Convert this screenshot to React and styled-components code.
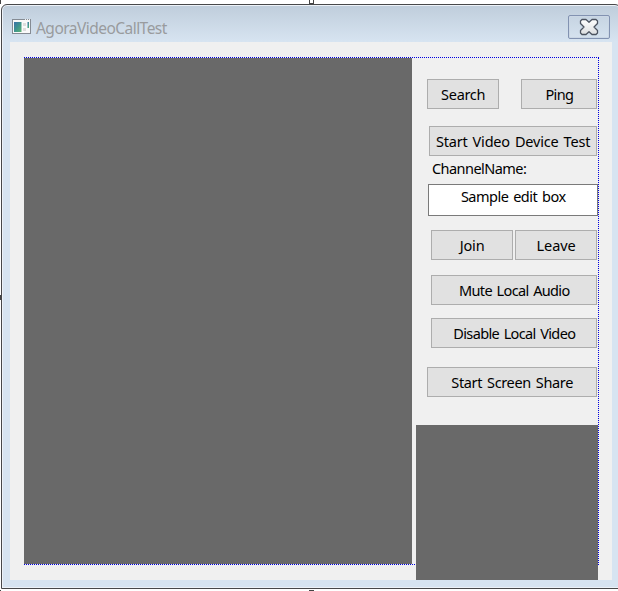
import React from "react";
import styled, { createGlobalStyle } from "styled-components";

const GlobalStyle = createGlobalStyle`
  * { box-sizing: border-box; }
  body { margin: 0; background: #fff; overflow: hidden; }
`;

const Canvas = styled.div`
  position: relative;
  width: 618px;
  height: 591px;
  padding: 4px 0 0 1px;
  overflow: hidden;
  background: #fff;
  font-family: "Noto Sans", sans-serif;
`;

const Handle = styled.i`
  position: absolute;
  left: ${(p) => p.$x}px;
  top: ${(p) => p.$y}px;
  width: 5px;
  height: 5px;
  border: 1px solid #444;
  background: #fff;
`;

const Window = styled.div`
  width: 620px;
  height: 585px;
  border: 1px solid #48484a;
  border-radius: 6px 6px 0 0;
  padding: 0 7px 7px 7px;
  background: linear-gradient(#bfcddb, #d7e4f1 37px);
  box-shadow: inset 0 0 0 1px #edf2f8;
`;

const TitleBar = styled.header`
  display: flex;
  align-items: flex-start;
  height: 37px;
  padding: 0 2px;
  margin-left: 1px;
`;

const AppIcon = styled.svg`
  flex: none;
  width: 19px;
  height: 16px;
  margin-top: 14px;
`;

const Title = styled.h1`
  flex: 1;
  margin: 11px 0 0 5px;
  color: #999b9e;
  font-size: 15.5px;
  font-weight: 400;
  line-height: 24px;
  letter-spacing: -0.53px;
`;

const CloseButton = styled.button`
  display: flex;
  align-items: center;
  justify-content: center;
  width: 42px;
  height: 24px;
  margin: 10px 1px 0 0;
  padding: 0;
  border: 1px solid #8292b1;
  border-radius: 2px;
  background: transparent;
  box-shadow: inset 0 0 0 1px #cbd7e5;
`;

const Client = styled.main`
  width: 602px;
  height: 538px;
  margin-left: 1px;
  padding: 15px 0 0 14px;
  background: #f0f0f0;
`;

const Guide = styled.div`
  display: flex;
  align-items: flex-start;
  width: 575px;
  height: 508px;
  border: 1px dotted #0000e0;
  border-left: 0;
`;

const VideoPane = styled.div`
  flex: none;
  width: ${(p) => p.$w}px;
  height: ${(p) => p.$h}px;
  background: #696969;
`;

const Sidebar = styled.div`
  display: flex;
  flex-direction: column;
  flex: none;
  width: 182px;
  margin-left: 4px;
  padding-top: 21px;
`;

const Row = styled.div`
  display: flex;
  justify-content: space-between;
  margin: 0 1px ${(p) => p.$after}px ${(p) => p.$inset}px;
`;

const Caption = styled.span`
  white-space: nowrap;
  word-spacing: 1.5px;
  letter-spacing: ${(p) => p.$spacing || 0}px;
  margin-right: ${(p) => p.$spacing || 0}px;
`;

const Button = styled.button`
  display: flex;
  align-items: center;
  justify-content: center;
  width: ${(p) => (p.$w ? p.$w + "px" : "100%")};
  height: 30px;
  padding: 0 0 1px;
  border: 1px solid #adadad;
  border-radius: 0;
  background: #e1e1e1;
  color: #000;
  font: 14.5px/20px "Noto Sans", sans-serif;
`;

const Label = styled.label`
  height: 28px;
  padding: 2px 0 0 16px;
  color: #000;
  font-size: 14.5px;
  line-height: 20px;
`;

const EditBox = styled.div`
  width: 170px;
  height: 32px;
  margin: 0 0 14px 12px;
  padding-top: 1px;
  border: 1px solid #7a7a7a;
  background: #fff;
  color: #000;
  font-size: 14.5px;
  line-height: 20px;
  text-align: center;
`;

function Action({ text, spacing, width }) {
  return (
    <Button $w={width}>
      <Caption $spacing={spacing}>{text}</Caption>
    </Button>
  );
}

export default function App() {
  return (
    <>
      <GlobalStyle />
      <Canvas>
        <Handle $x={-4} $y={-1} />
        <Handle $x={309} $y={-1} />
        <Handle $x={-4} $y={295} />
        <Handle $x={-4} $y={590} />
        <Handle $x={309} $y={590} />
        <Window>
          <TitleBar>
            <AppIcon viewBox="0 0 19 16">
              <defs>
                <linearGradient id="screen" x1="0" y1="0" x2="1" y2="1">
                  <stop offset="0" stopColor="#3b70aa" />
                  <stop offset="0.5" stopColor="#3f948e" />
                  <stop offset="1" stopColor="#5cb474" />
                </linearGradient>
              </defs>
              <path d="M0 0h19v15H0z" fill="#858b93" />
              <path d="M1 1h17v13H1z" fill="#fafafa" />
              <path d="M13 0h1v1h-1zM15 0h1v1h-1zM17 0h1v1h-1z" fill="#eee" />
              <path d="M2 3h7.5v10H2z" fill="url(#screen)" />
              <path d="M11 4h3v3h-3zM11 9h3v3h-3z" fill="#dedede" />
              <path d="M15.5 3H17v6h-1.5z" fill="url(#screen)" />
            </AppIcon>
            <Title>AgoraVideoCallTest</Title>
            <CloseButton aria-label="Close">
              <svg width="20" height="18" viewBox="0 0 20 18">
                <defs>
                  <linearGradient id="cross" x1="0" y1="0" x2="0" y2="1">
                    <stop offset="0" stopColor="#fff" />
                    <stop offset="1" stopColor="#dcdee0" />
                  </linearGradient>
                </defs>
                <path
                  d="M1.5 3 3 1.5h4l3 2.7 3-2.7h4L18.5 3v2.5L15 9l3.5 3.5V15L17 16.5h-4l-3-2.7-3 2.7H3L1.5 15v-2.5L5 9 1.5 5.5z"
                  fill="url(#cross)"
                  stroke="#4c5360"
                  strokeWidth="1.3"
                  strokeLinejoin="round"
                />
              </svg>
            </CloseButton>
          </TitleBar>
          <Client>
            <Guide>
              <VideoPane $w={388} $h={506} />
              <Sidebar>
                <Row $inset={11} $after={17}>
                  <Action text="Search" width={72} spacing={-0.3} />
                  <Action text="Ping" width={76} spacing={-0.7} />
                </Row>
                <Row $inset={13} $after={0}>
                  <Action text="Start Video Device Test" spacing={-0.2} />
                </Row>
                <Label>
                  <Caption $spacing={-0.55}>ChannelName:</Caption>
                </Label>
                <EditBox>
                  <Caption $spacing={-0.5}>Sample edit box</Caption>
                </EditBox>
                <Row $inset={15} $after={15}>
                  <Action text="Join" width={82} spacing={-0.2} />
                  <Action text="Leave" width={82} spacing={-0.1} />
                </Row>
                <Row $inset={15} $after={13}>
                  <Action text="Mute Local Audio" spacing={-0.65} />
                </Row>
                <Row $inset={15} $after={19}>
                  <Action text="Disable Local Video" spacing={-0.65} />
                </Row>
                <Row $inset={11} $after={28}>
                  <Action text="Start Screen Share" spacing={-0.35} />
                </Row>
                <VideoPane $w={182} $h={155} />
              </Sidebar>
            </Guide>
          </Client>
        </Window>
      </Canvas>
    </>
  );
}
